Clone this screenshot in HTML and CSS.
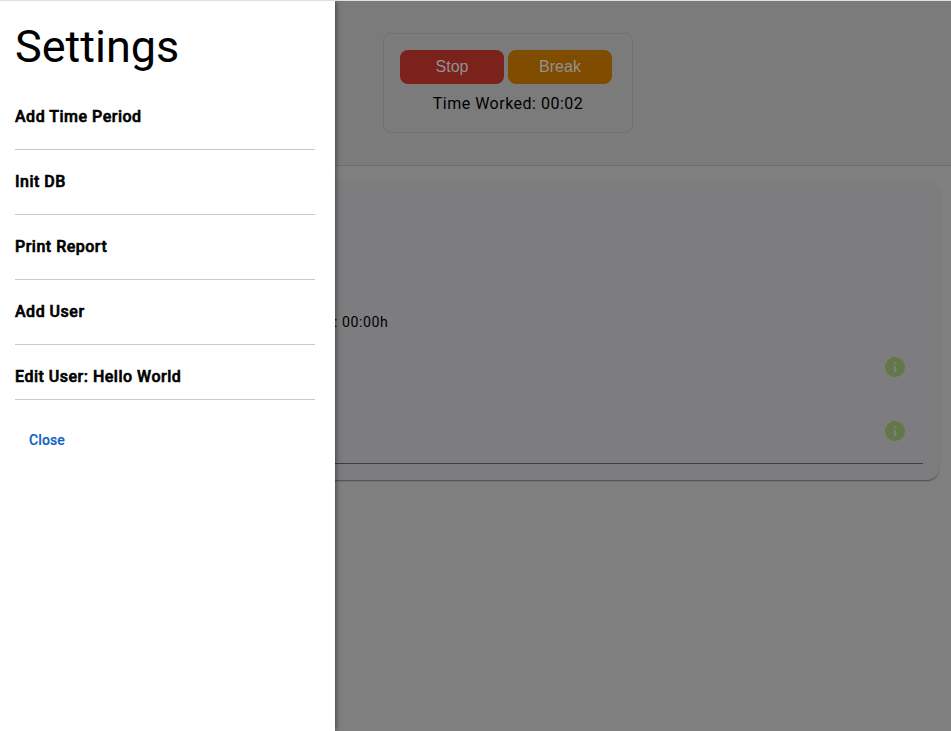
FILE: index.html
```html
<!DOCTYPE html>
<html lang="en">
<head>
<meta charset="utf-8">
<title>Settings</title>
<link rel="stylesheet" href="styles.css">
</head>
<body>
<div class="app">
  <header class="top">
    <section class="timer">
      <div class="timer-actions">
        <button class="btn stop">Stop</button>
        <button class="btn break">Break</button>
      </div>
      <p class="worked">Time Worked: 00:02</p>
    </section>
  </header>
  <main class="card">
    <p class="summary">: 00:00h</p>
    <div class="entry"><svg class="info" viewBox="0 0 24 24"><circle cx="12" cy="12" r="10"/><path class="mark" d="M10.7 7h2.6v2.4h-2.6zM10.7 11h2.6v6h-2.6z"/></svg></div>
    <div class="entry"><svg class="info" viewBox="0 0 24 24"><circle cx="12" cy="12" r="10"/><path class="mark" d="M10.7 7h2.6v2.4h-2.6zM10.7 11h2.6v6h-2.6z"/></svg></div>
  </main>
</div>
<aside class="drawer">
  <h1 class="title">Settings</h1>
  <nav class="menu">
    <div class="item">Add Time Period</div>
    <div class="item">Init DB</div>
    <div class="item">Print Report</div>
    <div class="item">Add User</div>
    <div class="item last">Edit User: Hello World</div>
  </nav>
  <button class="close">Close</button>
</aside>
</body>
</html>
```

FILE: styles.css
```css
* { box-sizing: border-box; }
body { margin: 0; height: 731px; overflow: hidden; background: #808080; font-family: Roboto, sans-serif; color: #000; }
.app { height: 731px; border-top: 1px solid #e0e0e0; }
.top { height: 165px; padding: 32px 0 0 383px; background: #7b7b7b; border-bottom: 1px solid #6f6f6f; }
.timer { width: 250px; height: 100px; padding: 16px; border: 1px solid #707070; border-radius: 8px; }
.timer-actions { display: flex; gap: 4px; }
.btn { width: 104px; height: 34px; padding: 0; border: 0; border-radius: 8px; font: 16px "Liberation Sans", sans-serif; color: #929292; }
.stop { background: #7a221b; }
.break { background: #804c00; }
.worked { margin: 8px 0 0; text-align: center; font-size: 16px; line-height: 24px; letter-spacing: .5px; }
.card { margin: 16px 12px 0; height: 298px; padding: 130px 16px 0 322px; border-radius: 12px; background: #7d7d80; box-shadow: 0 2px 1px -1px rgba(0,0,0,.2), 0 1px 1px rgba(0,0,0,.14), 0 1px 3px rgba(0,0,0,.12); }
.summary { margin: 0; height: 23px; font-size: 14.2px; line-height: 20px; letter-spacing: .53px; }
.entry { height: 64px; display: flex; justify-content: flex-end; align-items: center; padding-right: 16px; }
.entry:last-child { height: 65px; border-bottom: 1px solid #3e3e40; }
.info { width: 24px; height: 24px; fill: #627845; }
.mark { fill: #7d7d80; }
.drawer { position: absolute; left: 0; top: 1px; width: 335px; height: 730px; padding: 20px 20px 0 15px; background: #fff; box-shadow: 0 8px 10px -5px rgba(0,0,0,.2), 0 0 6px rgba(0,0,0,.6); clip-path: inset(0 -40px 0 0); }
.title { margin: 0; font-size: 45px; line-height: 52px; font-weight: 400; }
.menu { padding-top: 12px; }
.item { height: 65px; padding-top: 20px; font-size: 16px; line-height: 24px; font-weight: 500; letter-spacing: .5px; -webkit-text-stroke: .6px #000; border-bottom: 1px solid #c8c8c8; }
.last { height: 55px; }
.close { display: block; margin: 20px 0 0 2px; height: 40px; border: 0; padding: 0 12px; background: none; color: #0f61c4; font: 500 14px/20px Roboto, sans-serif; letter-spacing: .1px; -webkit-text-stroke: .15px #0f61c4; }
```
